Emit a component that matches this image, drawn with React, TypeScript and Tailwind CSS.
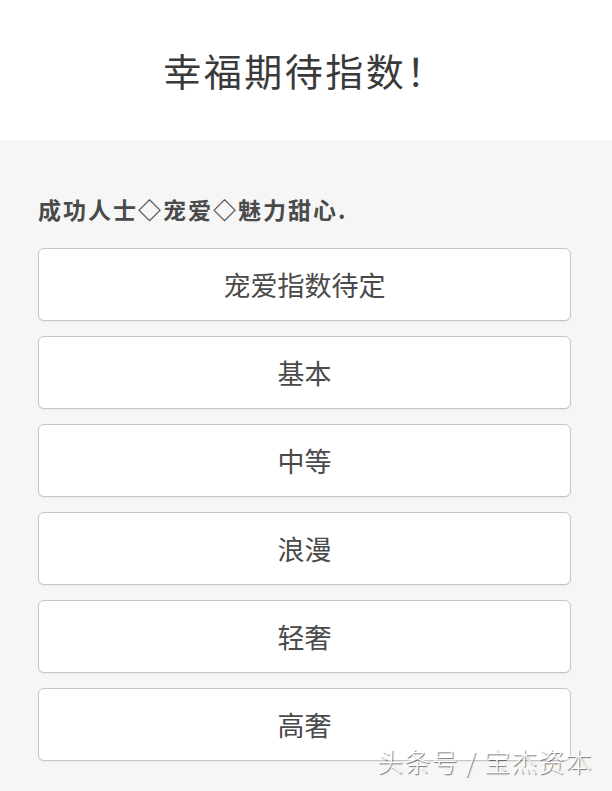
import React from 'react'

const OPTIONS = ['宠爱指数待定', '基本', '中等', '浪漫', '轻奢', '高奢']

export default function App() {
  return (
    <div className="relative w-[612px] h-[791px] overflow-hidden bg-[#f6f6f6] font-['Noto_Sans_CJK_SC','Noto_Sans',sans-serif]">
      {/* Header */}
      <div className="h-[140px] bg-white flex items-center justify-center pr-[2px]">
        <h1 className="text-[38px] leading-none tracking-[2.5px] text-[#3a3a3a] font-normal">幸福期待指数！</h1>
      </div>

      {/* Body */}
      <div className="pl-[38px] pr-[41px] pt-[54px]">
        <p className="text-[23px] leading-[30px] tracking-[2px] font-bold text-[#4a4a4a] mb-[24px]">
          成功人士◇宠爱◇魅力甜心.
        </p>
        <div className="flex flex-col gap-[15px]">
          {OPTIONS.map((opt) => (
            <div
              key={opt}
              className="h-[73px] bg-white border border-[#c6c6c6] rounded-[6px] shadow-[0_1px_1px_rgba(0,0,0,0.06)] flex items-center justify-center"
            >
              <span className="text-[27px] leading-none text-[#4a4a4a]">{opt}</span>
            </div>
          ))}
        </div>
      </div>

      {/* Watermark */}
      <div className="absolute left-[377px] top-[745px] text-[26px] leading-[32px] tracking-[1.2px] text-white font-light whitespace-nowrap [text-shadow:1px_1px_1px_rgba(0,0,0,0.55)]">
        头条号 / 宝杰资本
      </div>
    </div>
  )
}
